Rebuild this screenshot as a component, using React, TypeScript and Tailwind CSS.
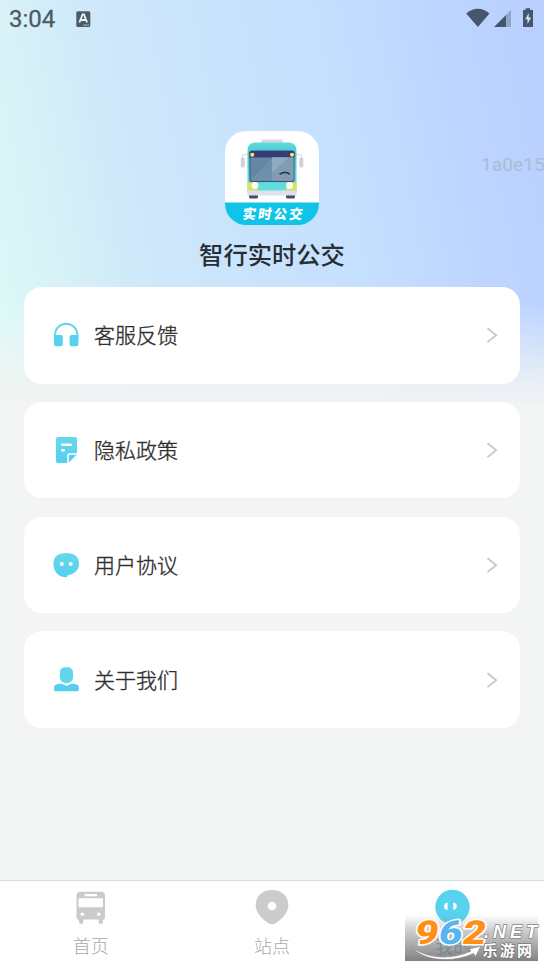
import type { ReactNode } from "react";

interface MenuItem {
	label: string;
	icon: ReactNode;
}

const IconGradient = ({ id }: { id: string }) => (
	<defs>
		<linearGradient id={id} x1="0" y1="0" x2="0" y2="1">
			<stop offset="0" stopColor="#66d8e8" />
			<stop offset="1" stopColor="#55cff2" />
		</linearGradient>
	</defs>
);

const HeadphonesIcon = () => (
	<svg width="26" height="26" viewBox="0 0 26 26" fill="none">
		<path d="M2 17v-4.100a11.200 11.200 0 0 1 22.400 0V17" stroke="#62d5e9" strokeWidth="1.900" />
		<path d="M1 13h6.800a2 2 0 0 1 2 2v7.200a2 2 0 0 1-2 2H3a2 2 0 0 1-2-2zM25.400 13h-6.800a2 2 0 0 0-2 2v7.200a2 2 0 0 0 2 2h4.800a2 2 0 0 0 2-2z" fill="#59d1ee" />
	</svg>
);

const PolicyIcon = () => (
	<svg width="26" height="26" viewBox="0 0 26 26" fill="none">
		<IconGradient id="policy" />
		<path d="M5 0h17a2 2 0 0 1 2 2v14.200h-7.500a2.300 2.300 0 0 0-2.300 2.300V26H5a2 2 0 0 1-2-2V2a2 2 0 0 1 2-2z" fill="url(#policy)" />
		<path d="M15.800 25.600v-6.300a1.500 1.500 0 0 1 1.500-1.500h6.500z" fill="#55cff2" />
		<path d="M9.300 7.800h8.500M9.300 13.200h1.500" stroke="#fff" strokeWidth="2.400" strokeLinecap="round" />
	</svg>
);

const AgreementIcon = () => (
	<svg width="26" height="26" viewBox="0 0 26 26" fill="none">
		<IconGradient id="agreement" />
		<path d="M13.200 1C21.500 1 26 4.500 26 12c0 5.800-4.500 10-10.300 11-1 .2-1.300.7-1.500 1.600-.2.900-1 .8-2.200.7C5 24.500.4 19.300.4 12 .4 4.500 5 1 13.200 1z" fill="url(#agreement)" />
		<circle cx="8.800" cy="12" r="2" fill="#fff" />
		<circle cx="17.700" cy="12" r="2" fill="#fff" />
	</svg>
);

const AboutIcon = () => (
	<svg width="26" height="26" viewBox="0 0 26 26" fill="none">
		<path d="M13.500.3c4.600 0 6.600 1.900 6.600 5.900v4c0 3.800-3.400 6-6.600 6s-6.600-2.200-6.600-6v-4c0-4 2-5.900 6.600-5.900z" fill="#62d5eb" />
		<path d="M8.400 16.700c1.200.3 2.800 1.200 5.100 2 2.300-.8 3.900-1.700 5.100-2 4.700.1 7.300 1 7.300 4v2.200a1.400 1.400 0 0 1-1.400 1.400H2.500a1.400 1.400 0 0 1-1.400-1.400v-2.200c0-3 2.600-3.900 7.300-4z" fill="#55cff0" />
	</svg>
);

const MENU_ITEMS: MenuItem[] = [
	{ label: "客服反馈", icon: <HeadphonesIcon /> },
	{ label: "隐私政策", icon: <PolicyIcon /> },
	{ label: "用户协议", icon: <AgreementIcon /> },
	{ label: "关于我们", icon: <AboutIcon /> },
];

function StatusBar() {
	return (
		<header className="flex h-[38px] items-center justify-between pr-[7px] pl-[9px] text-[#4d5b66]">
			<div className="flex items-center gap-[21px]">
				<span className="font-[Roboto] text-[24px] leading-none font-normal [-webkit-text-stroke:0.3px_#4d5b66]">3:04</span>
				<svg width="15" height="17" viewBox="0 0 15 17">
					<rect x=".3" y=".2" width="14" height="15.800" rx="1.500" fill="#4d5b66" />
					<path d="M3.400 11.500 6.600 3.500h1.300l3.200 8M4.700 9h5.100" fill="none" stroke="#e9f5fb" strokeWidth="1.800" />
					<path d="M7.500 14.200h5.500" stroke="#c8d8e0" strokeWidth="1.300" strokeDasharray="1.300 .7" />
				</svg>
			</div>
			<svg width="71" height="22" viewBox="0 0 71 22" fill="#47566c">
				<path d="M.2 5.500C7-.8 16.600-.8 23.500 5.500L11.900 19z" />
				<path d="M28 19 40 7v12z" />
				<path d="M40 7 45 2v17h-5z" fill="#8fa5cc" />
				<path d="M59.500.2h4.600V2H67v17H57V2h2.500z" />
				<path d="M62.700 5 59.300 11.300h2.200v4.600l3.600-6.500h-2.400z" fill="#d5e2ff" />
			</svg>
		</header>
	);
}

function AppLogo() {
	return (
		<svg width="94" height="94" viewBox="0 0 94 94">
			<defs>
				<clipPath id="logo-clip">
					<rect width="94" height="94" rx="21" />
				</clipPath>
				<linearGradient id="bus-body" x1="0" y1="0" x2="0" y2="1">
					<stop offset="0" stopColor="#60dbe0" />
					<stop offset=".25" stopColor="#48c7cf" />
					<stop offset="1" stopColor="#66dfe0" />
				</linearGradient>
				<clipPath id="windscreen">
					<path d="M25.500 26.500h43v21.800a1.500 1.500 0 0 1-1.500 1.500H27a1.500 1.500 0 0 1-1.500-1.500z" />
				</clipPath>
			</defs>
			<g clipPath="url(#logo-clip)">
				<path d="M0 0h94v94H0z" fill="#fff" />
				<path d="M35.500 13 37 8.500h20.500L59 13z" fill="#d5dae0" />
				<path d="M23 23.500h-3.500a2 2 0 0 0-2 2v2M71 23.500h3.500a2 2 0 0 1 2 2v2" fill="none" stroke="#d5dae3" strokeWidth="1.200" />
				<rect x="15.800" y="26.500" width="4" height="10" rx="1.500" fill="#cdd1da" />
				<rect x="74.300" y="26.500" width="4" height="10" rx="1.500" fill="#cdd1da" />
				<rect x="24" y="62" width="9" height="5.500" rx="1.500" fill="#4c4869" />
				<rect x="61" y="62" width="9" height="5.500" rx="1.500" fill="#4c4869" />
				<path d="M22.500 60V20c0-6 3-8.500 9-8.500h31c6 0 9 2.500 9 8.500v40z" fill="url(#bus-body)" />
				<path d="M24.500 21.500q0-1.800 2-1.800h41q2 0 2 1.800v27q0 2.500-2.500 2.500H27q-2.500 0-2.500-2.500z" fill="#3f5272" />
				<path d="M24.500 21.500q0-1.800 2-1.800h41q2 0 2 1.800v5h-45z" fill="#363c75" />
				<g clipPath="url(#windscreen)">
					<path d="M25 26h44v25H25z" fill="#6687a3" />
					<path d="M25 50 47 27v23z" fill="#6f90aa" />
					<path d="M47 26h22v24H47z" fill="#7f9db4" />
					<path d="M47 42V26h17z" fill="#90abbf" />
					<path d="M53 45q1-3 7-3t7 3v5H53z" fill="#8798b1" />
				</g>
				<path d="M54.500 42.800h1.500q1-1.200 4-1.200t4 1.200h1" fill="none" stroke="#28325c" strokeWidth="1.500" />
				<circle cx="27.300" cy="23.800" r="2" fill="#f4eb64" />
				<circle cx="67" cy="23.800" r="2" fill="#f4eb64" />
				<path d="M22.500 51.500h8l3 8h-11zM71.500 51.500h-8l-3 8h11z" fill="#dce25d" />
				<circle cx="30" cy="54.500" r="3.400" fill="#fffdf1" />
				<circle cx="64.500" cy="54.500" r="3.400" fill="#fffdf1" />
				<path d="M22 59.500h50v3.500q0 1.500-1.500 1.500h-47Q22 64.500 22 63z" fill="#dfe2e8" />
				<path d="M0 71.500h94V94H0z" fill="#10c3e9" />
				<text
					x="47.500"
					y="88.500"
					fill="#fff"
					fontFamily="'Noto Sans CJK SC', sans-serif"
					fontSize="13.500"
					fontWeight="900"
					letterSpacing="2"
					textAnchor="middle"
					transform="skewX(-8) translate(13 0)">
					实时公交
				</text>
			</g>
		</svg>
	);
}

function MenuCard({ label, icon }: MenuItem) {
	return (
		<button type="button" className="flex h-[96.700px] w-full items-center rounded-[18px] bg-white pr-[22px] pl-[29px]">
			{icon}
			<span className="ml-[15px] pb-px text-[21px] leading-none font-light text-[#2e2e2e] [-webkit-text-stroke:0.350px_#2e2e2e]">{label}</span>
			<svg className="ml-auto" width="12" height="16" viewBox="0 0 12 16" fill="none">
				<path d="m1.500 1.300 8.700 6.900-8.700 6.900" stroke="#c8c8c8" strokeWidth="1.800" />
			</svg>
		</button>
	);
}

const BusIcon = () => (
	<svg width="34" height="36" viewBox="0 0 34 36">
		<path d="M6.500 2.800h20.500a4 4 0 0 1 4 4v21.400a2.500 2.500 0 0 1-2 2.500v2a2.200 2.200 0 0 1-4.400 0v-2.200H9.400v2.200a2.200 2.200 0 0 1-4.400 0v-2a2.500 2.500 0 0 1-2.500-2.500V6.800a4 4 0 0 1 4-4z" fill="#cbcbcb" />
		<rect x="10.500" y="5" width="12.500" height="2.200" rx=".8" fill="#fff" />
		<rect x="4.500" y="9.300" width="24.500" height="9" rx="1" fill="#fff" />
		<circle cx="8.300" cy="25.300" r="1.800" fill="#fff" />
		<circle cx="24.800" cy="25.300" r="1.800" fill="#fff" />
	</svg>
);

const StationIcon = () => (
	<svg width="34" height="36" viewBox="0 0 34 36">
		<path d="M17 1c9.500 0 16.300 6.200 16.300 15 0 7.500-5.200 12.700-11.300 17.300q-5 3.700-10 0C5.900 28.700.7 23.500.7 16 .7 7.200 7.500 1 17 1z" fill="#cbcbcb" />
		<circle cx="17" cy="17" r="4.300" fill="#fff" />
	</svg>
);

const MineIcon = () => (
	<svg width="36" height="36" viewBox="0 0 36 36">
		<circle cx="17.500" cy="18" r="17.200" fill="#57d2ef" />
		<path d="M12.600 13.600c-4.800.4-4.800 7 0 7.400zM18.200 13.600c4.800.4 4.800 7 0 7.400z" fill="#fff" />
	</svg>
);

/** Translucent site badge over the bottom right corner of the tab bar. */
function SiteBadge() {
	return (
		<svg className="absolute right-0 bottom-[6px]" width="139" height="46" viewBox="0 0 139 46">
			<defs>
				<linearGradient id="badge-bg" x1="0" y1="0" x2="0" y2="1">
					<stop offset="0" stopColor="#8b8b8b" stopOpacity="0" />
					<stop offset=".35" stopColor="#8b8b8b" stopOpacity=".45" />
					<stop offset="1" stopColor="#777" stopOpacity=".93" />
				</linearGradient>
			</defs>
			<path d="M0 0h133v46H0z" fill="url(#badge-bg)" />
			<g
				fontFamily="Roboto, sans-serif"
				fontSize="33"
				fontWeight="900"
				stroke="#fff"
				strokeWidth="3"
				strokeLinejoin="round"
				paintOrder="stroke"
				transform="translate(10 28.500) skewX(-9) scale(1.220 1)">
				<text x="-1" y="0" fill="#ff8f17">9</text>
				<text x="18.500" y="0" fill="#58b5f0">6</text>
				<text x="38" y="0" fill="#ff8f17">2</text>
			</g>
			<text x="79" y="23" fill="#fff" stroke="#888" strokeWidth="1.500" paintOrder="stroke" fontFamily="'Liberation Sans', sans-serif" fontSize="18" fontWeight="700" fontStyle="italic" textLength="53">
				.NET
			</text>
			<path d="M7 32c15 12 40 13 59 4l-2-2 12-3-5.500 10.500-2-3C47 48.500 18 46 7 32z" fill="#fff" stroke="#888" strokeWidth=".7" />
			<text x="77.500" y="40.500" fill="#fff" stroke="#777" strokeWidth="1.500" paintOrder="stroke" fontFamily="'Noto Sans CJK SC', sans-serif" fontSize="15" fontWeight="700" letterSpacing="2.200">
				乐游网
			</text>
		</svg>
	);
}

const TABS = [
	{ label: "首页", icon: <BusIcon />, active: false },
	{ label: "站点", icon: <StationIcon />, active: false },
	{ label: "我的", icon: <MineIcon />, active: true },
];

function TabBar() {
	return (
		<nav className="relative grid h-[87px] grid-cols-3 border-t border-[#d9dddd] bg-white">
			{TABS.map(tab => (
				<div key={tab.label} className="flex flex-col items-center pt-[8px]">
					{tab.icon}
					<span className={tab.active ? "mt-[10px] text-[18px] leading-[20px] text-[#55b9ca]" : "mt-[10px] text-[18px] leading-[20px] font-light text-[#a8a8a8]"}>
						{tab.label}
					</span>
				</div>
			))}
			<SiteBadge />
		</nav>
	);
}

export default function App() {
	return (
		<div className="relative isolate flex h-[967px] w-[544px] flex-col overflow-hidden bg-[#f3f5f4] font-['Noto_Sans_CJK_SC',sans-serif]">
			<div className="absolute inset-x-0 top-0 -z-10 h-[408px] bg-[linear-gradient(79deg,#dbfaf6_0%,#d8f2f8_13%,#cfe8fa_27%,#cae4fc_42%,#c5dfff_63%,#bdd5ff_83%,#b8cfff_100%)] [mask-image:linear-gradient(to_bottom,black_74%,rgba(0,0,0,0.3)_91%,transparent)]" />
			<StatusBar />
			<span className="absolute top-[153px] left-[481px] font-[Roboto] text-[19.200px] leading-[23px] whitespace-nowrap text-[#adbbd4]">1a0e15</span>
			<main className="flex flex-1 flex-col items-center px-6 pt-[93px]">
				<AppLogo />
				<h1 className="mt-[14px] text-[24.300px] leading-[30px] font-medium text-[#262e34]">智行实时公交</h1>
				<div className="mt-[18px] flex w-full flex-col gap-[18.100px]">
					{MENU_ITEMS.map(item => (
						<MenuCard key={item.label} {...item} />
					))}
				</div>
			</main>
			<TabBar />
		</div>
	);
}
